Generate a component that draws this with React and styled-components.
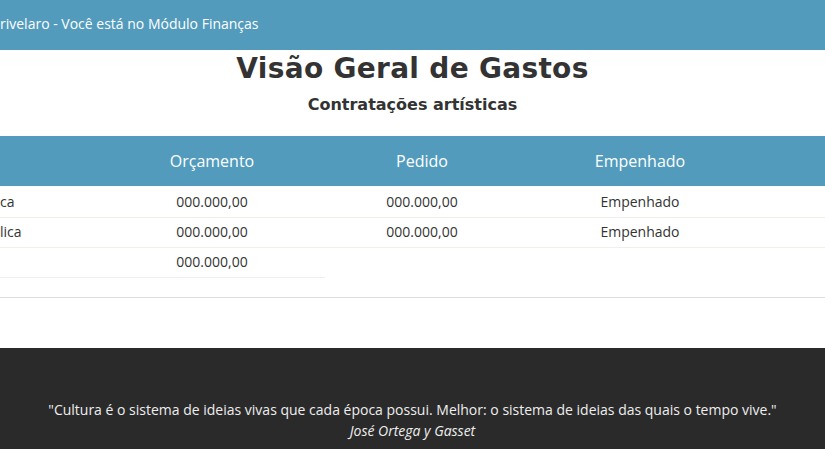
import React from 'react'
import styled, { createGlobalStyle } from 'styled-components'

const GlobalStyle = createGlobalStyle`
    html, body {
        margin: 0;
        padding: 0;
        background: #FFFFFF;
        font-family: "Open Sans", "Liberation Sans", sans-serif;
        overflow: hidden;
    }
`

const rows = [
    { label: 'ca', orcamento: '000.000,00', pedido: '000.000,00', status: 'Empenhado' },
    { label: 'lica', orcamento: '000.000,00', pedido: '000.000,00', status: 'Empenhado' },
]

const App = () => {
    return (
        <>
            <GlobalStyle />
            <Navbar>rivelaro - Você está no Módulo Finanças</Navbar>

            <Title>Visão Geral de Gastos</Title>
            <Subtitle>Contratações artísticas</Subtitle>

            <Table>
                <HeadRow>
                    <HeadCell />
                    <HeadCell>Orçamento</HeadCell>
                    <HeadCell>Pedido</HeadCell>
                    <HeadCell>Empenhado</HeadCell>
                    <HeadCell />
                </HeadRow>
                <Body>
                    {rows.map((row) => (
                        <Row key={row.label}>
                            <Cell $align='left'>{row.label}</Cell>
                            <Cell>{row.orcamento}</Cell>
                            <Cell>{row.pedido}</Cell>
                            <Cell>{row.status}</Cell>
                            <Cell />
                        </Row>
                    ))}
                    <Row>
                        <Cell $align='left' />
                        <Cell>000.000,00</Cell>
                    </Row>
                </Body>
            </Table>

            <Divider />

            <Footer>
                <Quote>"Cultura é o sistema de ideias vivas que cada época possui. Melhor: o sistema de ideias das quais o tempo vive."</Quote>
                <Author>José Ortega y Gasset</Author>
            </Footer>
        </>
    )
}

const Navbar = styled.div`
    height: 50px;
    box-sizing: border-box;
    padding-top: 13px;
    background: #529BBD;
    color: #FFFFFF;
    font-size: 14px;
    line-height: 22px;
    white-space: nowrap;
`

const Title = styled.h1`
    margin: 0;
    padding-top: 2px;
    text-align: center;
    color: #333333;
    font-family: "DejaVu Sans", sans-serif;
    font-weight: bold;
    font-size: 28px;
    line-height: 34px;
    letter-spacing: 0.3px;
`

const Subtitle = styled.h2`
    margin: 0;
    padding-top: 8px;
    text-align: center;
    color: #333333;
    font-family: "DejaVu Sans", sans-serif;
    font-weight: bold;
    font-size: 16px;
    line-height: 22px;
`

const Table = styled.div`
    margin-top: 20px;
`

const columns = '99px 226px 194px 242px 1fr'

const HeadRow = styled.div`
    display: grid;
    grid-template-columns: ${columns};
    height: 50px;
    background: #529BBD;
`

const HeadCell = styled.div`
    display: flex;
    align-items: center;
    justify-content: center;
    color: #FFFFFF;
    font-size: 16px;
`

const Body = styled.div`
    padding-top: 2px;
`

const Row = styled.div`
    display: grid;
    grid-template-columns: ${columns};
`

const Cell = styled.div`
    height: 27px;
    padding-bottom: 2px;
    border-bottom: 1px solid #F0EFEA;
    display: flex;
    align-items: center;
    justify-content: ${(p) => (p.$align === 'left' ? 'flex-start' : 'center')};
    color: #333333;
    font-size: 14px;
`

const Divider = styled.div`
    margin-top: 19px;
    height: 1px;
    background: #DDDDDD;
`

const Footer = styled.div`
    margin-top: 50px;
    height: 110px;
    box-sizing: border-box;
    padding-top: 51px;
    background: #2A2A2A;
    color: #EEEEEE;
    text-align: center;
    font-size: 14px;
    line-height: 21px;
`

const Quote = styled.div`
    white-space: nowrap;
`

const Author = styled.div`
    font-style: italic;
`

export default App
